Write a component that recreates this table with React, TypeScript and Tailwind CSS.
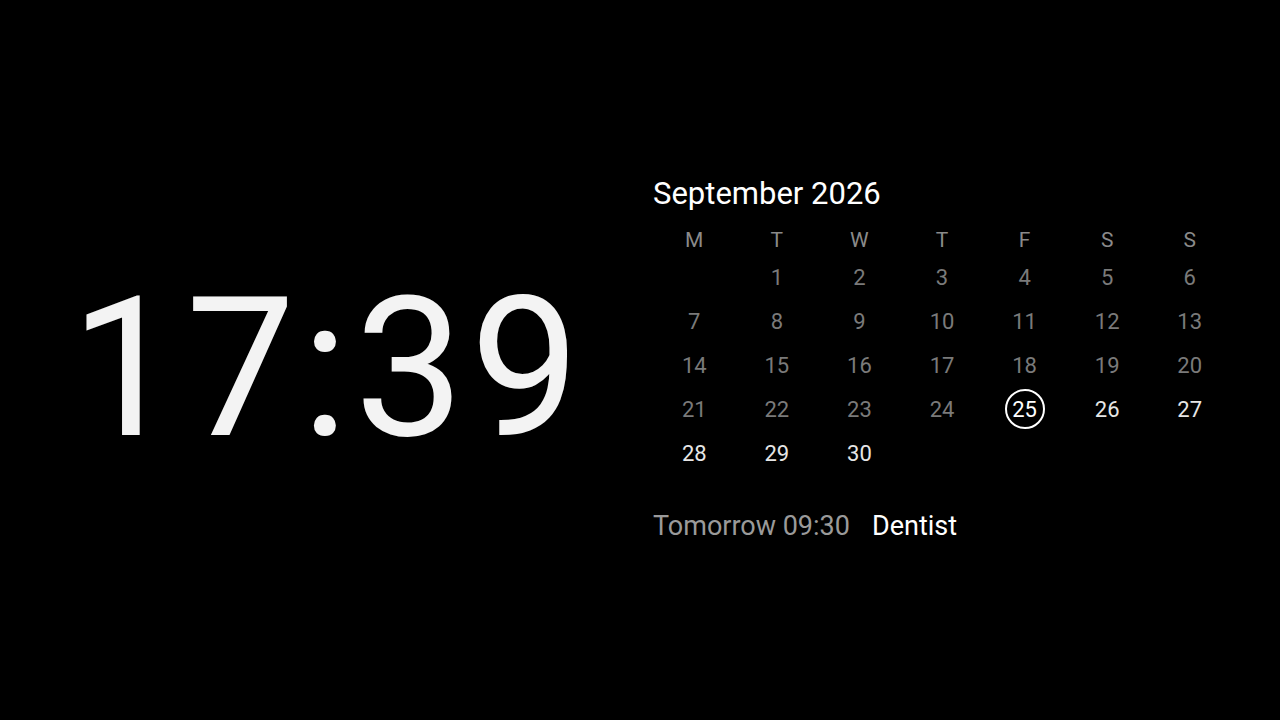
import React from 'react';

const weekDays = ['M', 'T', 'W', 'T', 'F', 'S', 'S'];
const today = 25;

const ClockFace: React.FC = () => (
  <div className="w-[640px] flex justify-center pt-[16px]">
    <span className="text-[195px] leading-none text-[#f3f3f3] tracking-[6px] pl-[16px]">17:39</span>
  </div>
);

const MonthGrid: React.FC = () => {
  // September 2026 starts on a Tuesday
  const cells: (number | null)[] = [null];
  for (let d = 1; d <= 30; d++) cells.push(d);

  return (
    <div className="w-[578px]">
      <div className="grid grid-cols-7 h-[26px] items-center text-[21px] text-[#8a8a8a]">
        {weekDays.map((w, i) => (
          <div key={i} className="text-center">{w}</div>
        ))}
      </div>
      <div className="grid grid-cols-7 mt-[4px] text-[22px]">
        {cells.map((d, i) => {
          if (d === null) return <div key={i} className="h-[44px]" />;
          const past = d < today;
          return (
            <div key={i} className="h-[44px] flex items-center justify-center">
              {d === today ? (
                <span className="w-[40px] h-[40px] rounded-full border-2 border-white flex items-center justify-center text-white">
                  {d}
                </span>
              ) : (
                <span className={past ? 'text-[#7a7a7a]' : 'text-[#e6e6e6]'}>{d}</span>
              )}
            </div>
          );
        })}
      </div>
    </div>
  );
};

export default function App() {
  return (
    <div
      className="w-[1280px] h-[720px] bg-black flex items-center"
      style={{ fontFamily: 'Roboto, "Noto Sans", sans-serif' }}
    >
      <ClockFace />
      <div className="flex flex-col pl-[13px] pb-[2px]">
        <h1 className="text-[31px] leading-[36px] text-white">September 2026</h1>
        <div className="mt-[13px]">
          <MonthGrid />
        </div>
        <div className="mt-[35px] flex gap-[22px] text-[27px] leading-[32px]">
          <span className="text-[#9a9a9a]">Tomorrow 09:30</span>
          <span className="text-white">Dentist</span>
        </div>
      </div>
    </div>
  );
}
